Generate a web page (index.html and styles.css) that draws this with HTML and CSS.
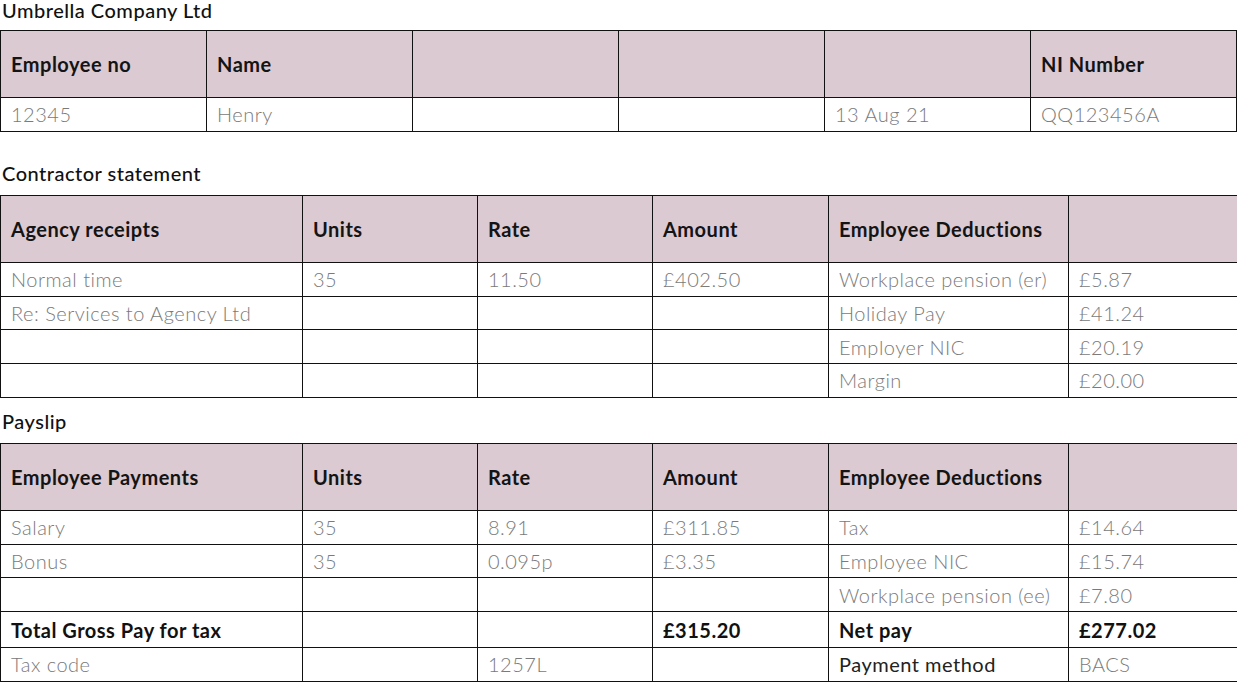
FILE: index.html
```html
<!DOCTYPE html>
<html>
<head>
<meta charset="utf-8">
<link rel="stylesheet" href="styles.css">
</head>
<body>
<div class="page">
  <h2 class="title first">Umbrella Company Ltd</h2>
  <table class="grid six gap-after">
    <colgroup><col class="c6"><col class="c6"><col class="c6"><col class="c6"><col class="c6"><col class="c6"></colgroup>
    <tr class="head"><th>Employee no</th><th>Name</th><th></th><th></th><th></th><th>NI Number</th></tr>
    <tr><td>12345</td><td>Henry</td><td></td><td></td><td>13 Aug 21</td><td>QQ123456A</td></tr>
  </table>

  <h2 class="title">Contractor statement</h2>
  <table class="grid">
    <colgroup><col class="ca"><col class="cb"><col class="cb"><col class="cc"><col class="cd"><col class="ce"></colgroup>
    <tr class="head"><th>Agency receipts</th><th>Units</th><th>Rate</th><th>Amount</th><th>Employee Deductions</th><th></th></tr>
    <tr><td>Normal time</td><td>35</td><td>11.50</td><td>£402.50</td><td>Workplace pension (er)</td><td>£5.87</td></tr>
    <tr><td>Re: Services to Agency Ltd</td><td></td><td></td><td></td><td>Holiday Pay</td><td>£41.24</td></tr>
    <tr><td></td><td></td><td></td><td></td><td>Employer NIC</td><td>£20.19</td></tr>
    <tr><td></td><td></td><td></td><td></td><td>Margin</td><td>£20.00</td></tr>
  </table>

  <h2 class="title">Payslip</h2>
  <table class="grid">
    <colgroup><col class="ca"><col class="cb"><col class="cb"><col class="cc"><col class="cd"><col class="ce"></colgroup>
    <tr class="head"><th>Employee Payments</th><th>Units</th><th>Rate</th><th>Amount</th><th>Employee Deductions</th><th></th></tr>
    <tr><td>Salary</td><td>35</td><td>8.91</td><td>£311.85</td><td>Tax</td><td>£14.64</td></tr>
    <tr><td>Bonus</td><td>35</td><td>0.095p</td><td>£3.35</td><td>Employee NIC</td><td>£15.74</td></tr>
    <tr><td></td><td></td><td></td><td></td><td>Workplace pension (ee)</td><td>£7.80</td></tr>
    <tr class="total"><td class="strong">Total Gross Pay for tax</td><td></td><td></td><td class="strong">£315.20</td><td class="strong">Net pay</td><td class="strong">£277.02</td></tr>
    <tr><td>Tax code</td><td></td><td>1257L</td><td></td><td class="dark">Payment method</td><td>BACS</td></tr>
  </table>
</div>
</body>
</html>
```

FILE: styles.css
```css
html, body {
  margin: 0;
  padding: 0;
  background: #ffffff;
}
body {
  font-family: "Lato", "Noto Sans", sans-serif;
  color: #111;
}
.page {
  width: 1237px;
}
.title {
  margin: 0;
  padding-left: 2px;
  font-size: 20px;
  font-weight: 500;
  letter-spacing: 0.5px;
  line-height: 46px;
  height: 45px;
  color: #111;
}
.title.first {
  line-height: 20px;
  height: 30px;
}
.grid {
  width: 1237px;
  border-collapse: collapse;
  table-layout: fixed;
}
.grid.gap-after {
  margin-bottom: 18px;
}
.c6 { width: 206px; }
.ca { width: 302px; }
.cb { width: 175px; }
.cc { width: 176px; }
.cd { width: 240px; }
.ce { width: 169px; }
.grid th, .grid td {
  border: 1px solid #111;
  padding: 0 0 0 10px;
  text-align: left;
  vertical-align: middle;
  font-size: 20px;
  letter-spacing: 0.5px;
  white-space: nowrap;
  overflow: hidden;
}
.grid th {
  background: #dccad2;
  height: 66px;
  font-weight: 700;
  color: #141414;
}
.grid td {
  height: 32.75px;
  font-weight: 300;
  color: #7a7a7a;
}
.grid tr.total td {
  height: 35px;
}
.grid td.strong {
  font-weight: 700;
  color: #111;
}
.grid td.dark {
  font-weight: 400;
  color: #222;
}
```
